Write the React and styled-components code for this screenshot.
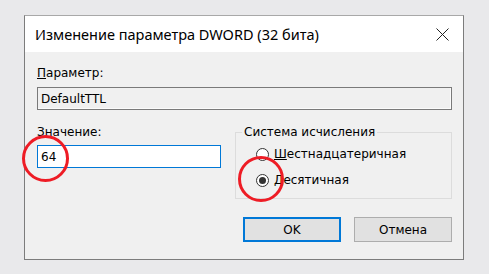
import React from 'react'
import styled, { createGlobalStyle } from 'styled-components'

const GlobalStyle = createGlobalStyle`
  html, body {
    margin: 0;
    padding: 0;
    background: #e9e9eb;
  }
`

const Page = styled.div`
  position: relative;
  width: 489px;
  height: 274px;
  padding: 15px 0 0 24px;
  box-sizing: border-box;
  font-family: 'DejaVu Sans', 'Liberation Sans', sans-serif;
  font-size: 12px;
  color: #000;
`

const Window = styled.div`
  width: 440px;
  height: 245px;
  box-sizing: border-box;
  background: #f0f0f0;
  border: 1px solid #7c7c7c;
  border-top-color: #a8a8a8;
  display: flex;
  flex-direction: column;
`

const TitleBar = styled.div`
  height: 36px;
  background: #fff;
  display: flex;
  align-items: center;
  justify-content: space-between;
  padding: 0 14px 0 10px;
`

const Title = styled.span`
  font-family: 'Noto Sans', 'Open Sans', sans-serif;
  font-size: 14.5px;
  color: #000;
`

const Body = styled.div`
  padding: 13px 11px 0 12px;
  display: grid;
  grid-template-columns: 184px 1fr;
  column-gap: 14px;
`

const Label = styled.div`
  line-height: 16px;
  height: 16px;
`

const Field = styled.div`
  grid-column: ${(p) => p.$span || 'auto'};
  display: flex;
  flex-direction: column;
  gap: ${(p) => p.$gap || 6}px;
  margin-top: ${(p) => p.$top || 0}px;
`

const TextBox = styled.div`
  height: 23px;
  box-sizing: border-box;
  border: 1px solid ${(p) => (p.$active ? '#0078d7' : '#7a7a7a')};
  background: ${(p) => (p.$active ? '#fff' : '#f0f0f0')};
  box-shadow: ${(p) => (p.$active ? 'none' : 'inset -1px -1px 0 #fbfbfb')};
  padding: 0 3px;
  display: flex;
  align-items: center;
  line-height: 16px;
`

const Group = styled.fieldset`
  margin: 0;
  padding: 6px 0 0 20px;
  border: 1px solid #dcdcdc;
  height: 75px;
  box-sizing: border-box;
  display: flex;
  flex-direction: column;
  gap: 10px;
`

const Legend = styled.legend`
  padding: 0 2px;
  margin-left: -14px;
  line-height: 16px;
`

const Option = styled.label`
  display: flex;
  align-items: center;
  gap: 5px;
  line-height: 16px;
`

const Radio = styled.span`
  width: 13px;
  height: 13px;
  box-sizing: border-box;
  border-radius: 50%;
  border: 1px solid #333;
  background: #fff;
  display: flex;
  align-items: center;
  justify-content: center;

  &::after {
    content: '';
    display: ${(p) => (p.$checked ? 'block' : 'none')};
    width: 7px;
    height: 7px;
    border-radius: 50%;
    background: #333;
  }
`

const Buttons = styled.div`
  grid-column: 1 / 3;
  display: flex;
  justify-content: flex-end;
  gap: 13px;
  margin-top: 18px;
`

const Button = styled.div`
  width: 98px;
  height: 25px;
  box-sizing: border-box;
  background: #e1e1e1;
  border: ${(p) => (p.$default ? '2px solid #0078d7' : '1px solid #adadad')};
  display: flex;
  align-items: center;
  justify-content: center;
`

const Mark = styled.div`
  position: absolute;
  width: ${(p) => p.$size}px;
  height: ${(p) => p.$size}px;
  left: ${(p) => p.$x}px;
  top: ${(p) => p.$y}px;
  box-sizing: border-box;
  border: 3px solid #ee1c25;
  border-radius: 50%;
`

const CloseIcon = () => (
  <svg width='13' height='13' viewBox='0 0 13 13'>
    <path d='M0.5 0.5 L12.5 12.5 M12.5 0.5 L0.5 12.5' stroke='#222' strokeWidth='1' />
  </svg>
)

const App = () => (
  <Page>
    <GlobalStyle />
    <Window>
      <TitleBar>
        <Title>Изменение параметра DWORD (32 бита)</Title>
        <CloseIcon />
      </TitleBar>
      <Body>
        <Field $span='1 / 3'>
          <Label><u>П</u>араметр:</Label>
          <TextBox>DefaultTTL</TextBox>
        </Field>
        <Field $top={14} $gap={5}>
          <Label><u>З</u>начение:</Label>
          <TextBox $active>64</TextBox>
        </Field>
        <Field $top={14}>
          <Group>
            <Legend>Система исчисления</Legend>
            <Option>
              <Radio />
              <span><u>Ш</u>естнадцатеричная</span>
            </Option>
            <Option>
              <Radio $checked />
              <span><u>Д</u>есятичная</span>
            </Option>
          </Group>
        </Field>
        <Buttons>
          <Button $default>OK</Button>
          <Button>Отмена</Button>
        </Buttons>
      </Body>
    </Window>
    <Mark $x={22} $y={135} $size={47} />
    <Mark $x={238} $y={156} $size={46} />
  </Page>
)

export default App
